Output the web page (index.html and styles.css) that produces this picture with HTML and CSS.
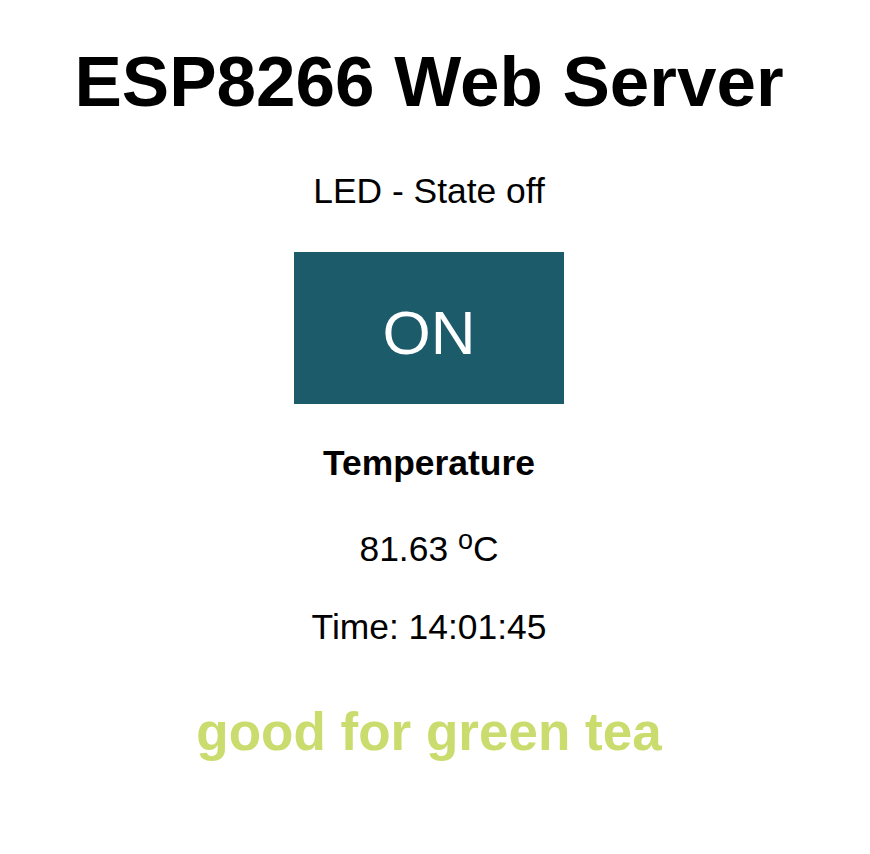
FILE: index.html
```html
<!DOCTYPE html>
<html>
<head>
<meta charset="utf-8">
<title>ESP8266 Web Server</title>
<link rel="stylesheet" href="styles.css">
</head>
<body>
<h1 class="title">ESP8266 Web Server</h1>
<p class="line state">LED - State off</p>
<button class="toggle">ON</button>
<p class="line label">Temperature</p>
<p class="line temp">81.63 <sup class="deg">o</sup>C</p>
<p class="line time">Time: 14:01:45</p>
<h2 class="tea">good for green tea</h2>
</body>
</html>
```
FILE: styles.css
```css
html {
  background: #ffffff;
}

body {
  margin: 0;
  width: 858px;
  text-align: center;
  font-family: "Liberation Sans", Arial, Helvetica, sans-serif;
  color: #000000;
}

.title {
  margin: 42px 0 0;
  font-size: 71px;
  line-height: 80px;
  font-weight: bold;
}

.line {
  margin: 0;
  font-size: 35.4px;
  line-height: 40px;
}

.state {
  margin-top: 49px;
}

.toggle {
  display: block;
  margin: 41px auto 0;
  width: 270px;
  height: 152px;
  box-sizing: border-box;
  padding: 10px 0 0;
  border: none;
  background: #1b5b6a;
  color: #ffffff;
  font-family: "Liberation Sans", Arial, Helvetica, sans-serif;
  font-size: 62px;
  line-height: 142px;
  cursor: pointer;
}

.label {
  margin-top: 39px;
  font-weight: bold;
}

.temp {
  margin-top: 46px;
}

.deg {
  font-size: 27px;
  line-height: 0;
  vertical-align: 12px;
}

.time {
  margin-top: 38px;
}

.tea {
  margin: 55px 0 0;
  font-size: 53px;
  line-height: 60px;
  font-weight: bold;
  color: #c9dc6d;
}
```
